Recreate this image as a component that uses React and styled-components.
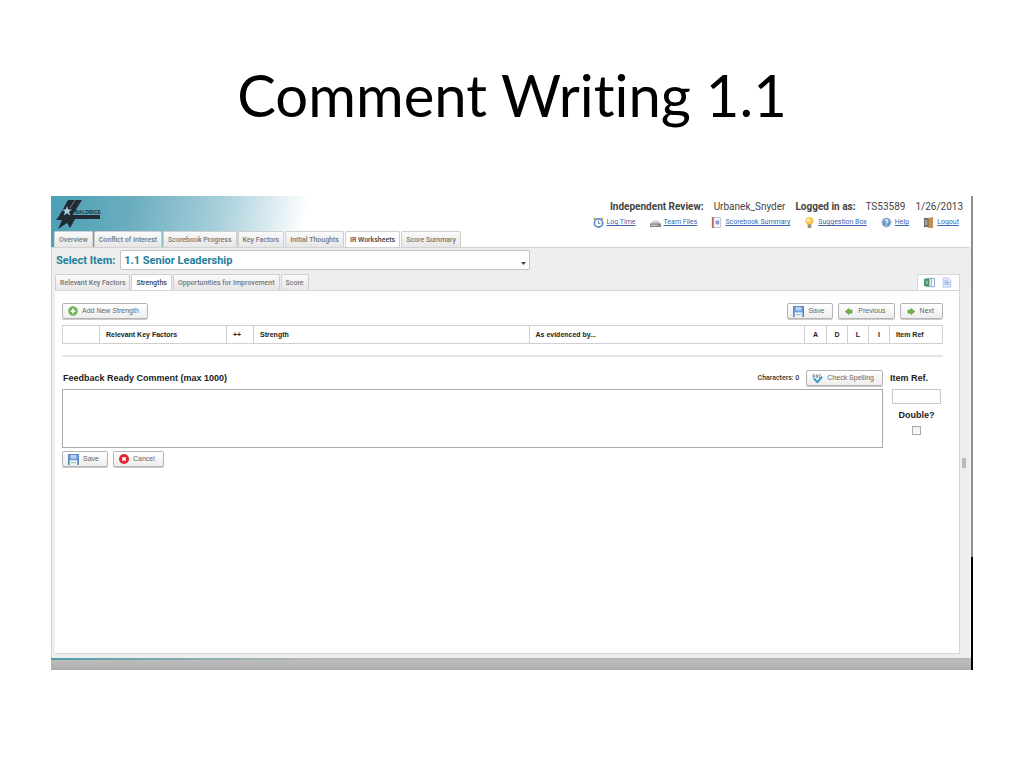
import React from "react";
import styled, { createGlobalStyle, css } from "styled-components";

const Global = createGlobalStyle`
  *, *::before, *::after { box-sizing: border-box; }
  body { margin: 0; background: #fff; font-family: Roboto, "Liberation Sans", sans-serif; }
  button, input, select, textarea { font-family: inherit; margin: 0; }
`;

const Slide = styled.main`
  display: flex;
  flex-direction: column;
  padding: 0 51px 96px;
`;

const Title = styled.h1`
  margin: 0;
  padding: 59px 0 65px;
  font: 400 58px/72px Lato, sans-serif;
  font-variant-ligatures: none;
  color: #000;
  text-align: center;
`;

const Window = styled.section`
  display: flex;
  flex-direction: column;
  border-right: 2px solid;
  border-image: linear-gradient(#8e8e8e 0 360px, #000 360px) 1;
`;

const Header = styled.header`
  display: flex;
  justify-content: space-between;
  height: 51px;
  background: linear-gradient(100deg, #4ba0b4 0, #69adbf 80px, #a9d0db 170px, #fff 255px);
`;

const Brand = styled.div`
  display: flex;
  flex-direction: column;
  justify-content: space-between;
  padding-left: 3px;
`;

const Tabs = styled.nav`
  display: flex;
  align-items: flex-end;
  gap: 1px;
`;

const Tab = styled.button`
  height: 16px;
  padding: 0 4px;
  border: 1px solid #cfcfcf;
  border-bottom: 0;
  border-radius: 2px 2px 0 0;
  background: linear-gradient(#fafafa, #e6e6e6);
  color: #777;
  font-size: 7px;
  font-weight: 500;
  line-height: 14px;
  white-space: nowrap;
  ${(p) => p.$active && css`
    background: #fff;
    color: #444;
  `}
`;

const Account = styled.div`
  display: flex;
  flex-direction: column;
  align-items: flex-end;
  gap: 3px;
  padding: 5px 8px 0 0;
`;

const Session = styled.div`
  display: flex;
  gap: 10px;
  font-size: 10px;
  line-height: 12px;
  color: #444;
`;

const Links = styled.nav`
  display: flex;
  gap: 14px;
  padding-right: 4px;
`;

const Link = styled.a`
  display: flex;
  align-items: center;
  gap: 3px;
  color: #3a67b0;
  font-size: 7px;
  line-height: 12px;
`;

const Workspace = styled.div`
  display: flex;
  flex-direction: column;
  border: solid #d2d2d2;
  border-width: 1px 0 0 1px;
  border-radius: 0 3px 0 0;
  background: #eee;
  padding: 2px 0 4px 3px;
`;

const Picker = styled.label`
  display: flex;
  align-items: center;
  gap: 5px;
  padding-left: 1px;
  color: #22809a;
  font-size: 11px;
  font-weight: 700;
`;

const SelectBox = styled.span`
  display: grid;
  align-items: center;
  width: 410px;
  & > * { grid-area: 1 / 1; }
  & > svg { justify-self: end; margin: 6px 4px 0; pointer-events: none; }
`;

const Select = styled.select`
  appearance: none;
  width: 100%;
  height: 20px;
  padding: 0 3px;
  border: 1px solid #c4c4c4;
  border-radius: 2px;
  background: #fff;
  color: #22809a;
  font-size: 11px;
  font-weight: 700;
`;

const SubBar = styled.div`
  display: flex;
  justify-content: space-between;
  margin: 4px 11px 0 0;
`;

const ViewTools = styled.div`
  display: flex;
  align-items: center;
  gap: 7px;
  height: 16px;
  padding: 0 7px 0 6px;
  border: 1px solid #d6d6d6;
  border-bottom: 0;
  border-radius: 3px 0 0 0;
  background: #fff;
`;

const IconButton = styled.button`
  display: flex;
  padding: 0;
  border: 0;
  background: none;
`;

const Body = styled.div`
  display: grid;
  grid-template-columns: minmax(0, 1fr) 11px;
`;

const Sheet = styled.div`
  display: flex;
  flex-direction: column;
  min-height: 364px;
  padding: 12px 16px 0 7px;
  border: solid #d6d6d6;
  border-width: 1px 1px 1px 0;
  background: #fff;
`;

const Gutter = styled.div`
  display: flex;
  align-items: center;
  padding: 0 0 18px 2px;
  border-right: 1px solid #fafafa;
`;

const Handle = styled.span`
  width: 4px;
  height: 10px;
  border: 1px solid #bbb;
  background: #bbb;
`;

const Row = styled.div`
  display: flex;
  align-items: center;
  justify-content: ${(p) => (p.$spread ? "space-between" : "flex-start")};
  gap: 5px;
`;

const Button = styled.button`
  display: flex;
  align-items: center;
  gap: 4px;
  height: 16px;
  padding: 0 8px 0 5px;
  border: 1px solid #b4b4b4;
  border-radius: 2px;
  background: linear-gradient(#fff, #ededed);
  box-shadow: 0 1px 0 #ccc;
  color: #666;
  font-family: "Liberation Sans", sans-serif;
  font-size: 7px;
  line-height: 12px;
  white-space: nowrap;
`;

const Table = styled.table`
  width: 100%;
  margin-top: 6px;
  table-layout: fixed;
  border-collapse: collapse;
  th {
    height: 18px;
    padding: 0 6px;
    border: 1px solid #d0d0d0;
    color: #222;
    font-family: "Liberation Sans", sans-serif;
    font-size: 7px;
    font-weight: 700;
    line-height: 12px;
    text-align: left;
    white-space: nowrap;
  }
  th:nth-child(n + 6):nth-child(-n + 9) {
    text-align: center;
  }
`;

const Rule = styled.hr`
  width: 100%;
  height: 2px;
  margin: 11px 0 13px;
  border: 0;
  background: #e6e6e6;
`;

const Editor = styled.div`
  display: grid;
  grid-template-columns: minmax(0, 1fr) 54px;
  gap: 6px;
`;

const Stack = styled.div`
  display: flex;
  flex-direction: column;
  align-items: ${(p) => (p.$center ? "center" : "stretch")};
  gap: 3px;
`;

const Label = styled.label`
  align-self: ${(p) => (p.$start ? "flex-start" : "auto")};
  padding-left: 1px;
  color: #222;
  font-family: "Liberation Sans", sans-serif;
  font-size: 9px;
  font-weight: 700;
  line-height: 16px;
`;

const Count = styled.span`
  padding-right: 2px;
  color: #333;
  font-size: 7px;
  font-weight: 500;
`;

const Comment = styled.textarea`
  display: block;
  width: 100%;
  height: 59px;
  border: 1px solid #aaa;
  background: #fff;
  resize: none;
`;

const RefInput = styled.input`
  width: 49px;
  height: 15px;
  border: 1px solid #c8c8c8;
  background: #fff;
`;

const Check = styled.input`
  appearance: none;
  width: 9px;
  height: 9px;
  border: 1px solid #aaa;
  background: linear-gradient(#eee, #fff);
`;

const Footer = styled.footer`
  height: 12px;
  border-top: 2px solid;
  border-image: linear-gradient(90deg, #4f9fa6, #b5b5b5 260px) 1;
  background: linear-gradient(#bcbcbc, #adadad);
`;

const Svg = ({ w = 11, h = 11, box = "0 0 12 12", children }) => (
  <svg width={w} height={h} viewBox={box} fill="none" aria-hidden="true">{children}</svg>
);

const LogoText = styled.text`
  fill: #222b33;
  font: 700 5px "Liberation Sans", sans-serif;
`;

const Logo = () => (
  <Svg w={48} h={34} box="0 0 48 34">
    <path d="M14 4h14l-9 15h27v4H21l-5 9-3-5-9 6 4-9H2l3-4z" fill="#222b33" />
    <path d="m21 4-5 8M27 6l-8 13" stroke="#5b8190" />
    <path d="m13 10 1.200 3.500H18l-3 2.200 1.200 3.800-3.200-2.300-3.200 2.300 1.200-3.800-3-2.200h3.800z" fill="#a5d2de" />
    <LogoText x="21" y="18">BALDRIGE</LogoText>
  </Svg>
);

const Clock = () => (
  <Svg><path d="m1 3 2-2m8 2L9 1" stroke="#d9a23c" strokeWidth="2" /><circle cx="6" cy="6.500" r="4.500" fill="#fff" stroke="#5b93d4" strokeWidth="2" /><path d="M6 4v3h2" stroke="#667" /></Svg>
);
const Drive = () => (
  <Svg><path d="M3 4h6l3 4H0z" fill="#ccc" /><path d="M0 7h12v4H0z" fill="#888" /><path d="M1 9h7" stroke="#ddd" /></Svg>
);
const Book = () => (
  <Svg><path d="M1.500 .5h9v11h-9z" fill="#f4f4fb" stroke="#bbc" /><path d="M1 0h2v12H1z" fill="#b66a5c" /><path d="M5 4h4v4H5z" fill="#8c9ad6" /></Svg>
);
const Bulb = () => (
  <Svg><circle cx="6" cy="4.500" r="4.500" fill="#f5c851" /><circle cx="5" cy="3.500" r="2" fill="#fff2b8" /><path d="M4 8h4v4H4z" fill="#9b8f78" /></Svg>
);
const Help = () => (
  <Svg><circle cx="6" cy="6" r="5" fill="#6f98cc" stroke="#a9bfdd" /><path d="M4.500 4.500c0-2 3-2 3 0 0 1-1.500 1-1.500 2.500M6 8.500v1" stroke="#fff" strokeWidth="1.200" /></Svg>
);
const Door = () => (
  <Svg><path d="M1 1h6v10H1z" fill="#66706c" /><path d="m6 1 5-1v12H6z" fill="#c98a4b" /><path d="M2 3h3v6H2z" fill="#98a49c" /></Svg>
);
const Plus = () => (
  <Svg w={10} h={10}><circle cx="6" cy="6" r="5.500" fill="#68b452" stroke="#8cc878" /><path d="M6 3v6M3 6h6" stroke="#fff" strokeWidth="2" /></Svg>
);
const Disk = () => (
  <Svg><path d="M.5.5h11v11H.5z" fill="#6f9fda" stroke="#4a7cba" /><path d="M3 1h6v4H3z" fill="#b8d2ef" /><path d="M2 7h8v5H2z" fill="#f3f8fc" /><path d="M3 9.500h6" stroke="#86b871" /></Svg>
);
const Arrow = ({ right }) => (
  <Svg w={10} h={9}><path d={right ? "m11 6-5-4v2H2v4h4v2z" : "m1 6 5-4v2h4v4H6v2z"} fill="#72b34b" stroke="#5d9a42" /></Svg>
);
const Spell = () => (
  <Svg><path d="M1 5V2h2v3M1 4h2M5 2v3h1V2zM10 2H8v3h2" stroke="#667f95" strokeWidth=".8" /><path d="m2 6 4 4 5-6" stroke="#2b97c4" strokeWidth="2" /></Svg>
);
const Cross = () => (
  <Svg w={10} h={10}><circle cx="6" cy="6" r="6" fill="#df2632" /><path d="m4 4 4 4m0-4L4 8" stroke="#fff" strokeWidth="2" /></Svg>
);
const Sheets = () => (
  <Svg><path d="M2.500 1.500h9v9h-9z" fill="#fff" stroke="#7a9fc4" /><path d="M0 2h6v8H0z" fill="#45916a" /><path d="m2 4 2 4m0-4L2 8" stroke="#a9d0b8" /><path d="M8 2v8" stroke="#7a9fc4" /></Svg>
);
const Doc = () => (
  <Svg w={10}><path d="M1.500.5h6l3 3v8h-9z" fill="#e3ebfc" stroke="#a9bdea" /><path d="M3 4h4M3 6h6M3 8h6" stroke="#7f9de0" /></Svg>
);

const mainTabs = ["Overview", "Conflict of Interest", "Scorebook Progress", "Key Factors", "Initial Thoughts", "IR Worksheets", "Score Summary"];
const subTabs = ["Relevant Key Factors", "Strengths", "Opportunities for Improvement", "Score"];
const links = [
  ["Log Time", Clock], ["Team Files", Drive], ["Scorebook Summary", Book],
  ["Suggestion Box", Bulb], ["Help", Help], ["Logout", Door],
];
const columns = [
  ["", 37], ["Relevant Key Factors", 127], ["++", 27], ["Strength"], ["As evidenced by..."],
  ["A", 22], ["D", 21], ["L", 21], ["I", 21], ["Item Ref", 53],
];

export default function App() {
  return (
    <>
      <Global />
      <Slide>
        <Title>Comment Writing 1.1</Title>
        <Window>
          <Header>
            <Brand>
              <Logo />
              <Tabs>
                {mainTabs.map((t) => <Tab key={t} $active={t === "IR Worksheets"}>{t}</Tab>)}
              </Tabs>
            </Brand>
            <Account>
              <Session>
                <strong>Independent Review:</strong><span>Urbanek_Snyder</span>
                <strong>Logged in as:</strong><span>TS53589</span><span>1/26/2013</span>
              </Session>
              <Links>
                {links.map(([t, Icon]) => <Link key={t} href="#"><Icon />{t}</Link>)}
              </Links>
            </Account>
          </Header>
          <Workspace>
            <Picker>
              Select Item:
              <SelectBox>
                <Select defaultValue="1.1"><option value="1.1">1.1 Senior Leadership</option></Select>
                <Svg w={5} h={3} box="0 0 5 3"><path d="M0 0h5L2.500 3z" fill="#444" /></Svg>
              </SelectBox>
            </Picker>
            <SubBar>
              <Tabs>
                {subTabs.map((t) => <Tab key={t} $active={t === "Strengths"}>{t}</Tab>)}
              </Tabs>
              <ViewTools>
                <IconButton aria-label="Spreadsheet"><Sheets /></IconButton>
                <IconButton aria-label="Document"><Doc /></IconButton>
              </ViewTools>
            </SubBar>
            <Body>
              <Sheet>
                <Row $spread>
                  <Button><Plus />Add New Strength</Button>
                  <Row>
                    <Button><Disk />Save</Button>
                    <Button><Arrow />Previous</Button>
                    <Button><Arrow right />Next</Button>
                  </Row>
                </Row>
                <Table>
                  <colgroup>{columns.map(([t, w]) => <col key={t} width={w} />)}</colgroup>
                  <thead><tr>{columns.map(([t]) => <th key={t} scope="col">{t}</th>)}</tr></thead>
                </Table>
                <Rule />
                <Editor>
                  <Stack>
                    <Row $spread>
                      <Label htmlFor="comment">Feedback Ready Comment (max 1000)</Label>
                      <Row>
                        <Count>Characters: 0</Count>
                        <Button><Spell />Check Spelling</Button>
                      </Row>
                    </Row>
                    <Comment id="comment" />
                    <Row>
                      <Button><Disk />Save</Button>
                      <Button><Cross />Cancel</Button>
                    </Row>
                  </Stack>
                  <Stack $center>
                    <Label $start htmlFor="ref">Item Ref.</Label>
                    <RefInput id="ref" />
                    <Label htmlFor="double">Double?</Label>
                    <Check id="double" type="checkbox" />
                  </Stack>
                </Editor>
              </Sheet>
              <Gutter><Handle /></Gutter>
            </Body>
          </Workspace>
          <Footer />
        </Window>
      </Slide>
    </>
  );
}
